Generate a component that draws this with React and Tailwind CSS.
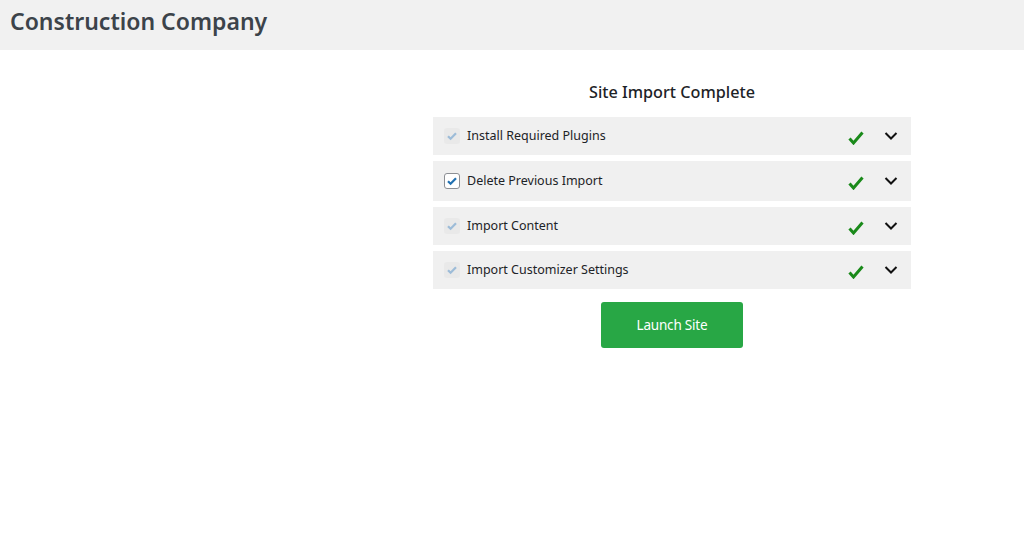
import React from 'react';

const steps = [
  { label: 'Install Required Plugins', active: false },
  { label: 'Delete Previous Import', active: true },
  { label: 'Import Content', active: false },
  { label: 'Import Customizer Settings', active: false },
];

function Box({ active }) {
  if (active) {
    return (
      <span className="w-4 h-4 rounded-[3px] border border-[#8c8f94] bg-white flex items-center justify-center">
        <svg width="12" height="12" viewBox="0 0 12 12">
          <path d="M2 6.2l2.6 2.6L10 3.2" fill="none" stroke="#2271b1" strokeWidth="2.2" />
        </svg>
      </span>
    );
  }
  return (
    <span className="w-4 h-4 rounded-[3px] bg-[#e9e9e9] flex items-center justify-center">
      <svg width="12" height="12" viewBox="0 0 12 12">
        <path d="M2 6.2l2.6 2.6L10 3.2" fill="none" stroke="#9dbcd8" strokeWidth="2.2" />
      </svg>
    </span>
  );
}

function Row({ label, active }) {
  return (
    <div className={`bg-[#f0f0f0] flex items-center pl-[11px] pr-[13px] ${active ? 'h-10' : 'h-[38px]'}`}>
      <Box active={active} />
      <span className="ml-[7px] text-[12.5px] text-[#1d2327] pt-px">{label}</span>
      <div className="ml-auto flex items-center gap-[20px] pt-1">
        <svg width="16" height="14" viewBox="0 0 16 14">
          <path d="M1.5 7.5l4 4.5L14.5 1.5" fill="none" stroke="#1a8a1a" strokeWidth="3" />
        </svg>
        <svg width="14" height="10" viewBox="0 0 14 10" className="-mt-1">
          <path d="M1.5 2l5.5 5.5L12.5 2" fill="none" stroke="#111" strokeWidth="2" />
        </svg>
      </div>
    </div>
  );
}

export default function App() {
  return (
    <div className="min-h-[550px] bg-white font-['Noto_Sans',sans-serif]">
      <header className="h-[50px] bg-[#f1f1f1] flex items-center px-[10px]">
        <h1 className="text-[23px] font-semibold text-[#3c434a] -mt-[7px]">Construction Company</h1>
      </header>
      <div className="flex">
        <div className="w-[433px] shrink-0" />
        <div className="w-[478px] flex flex-col">
          <h2 className="text-center text-[16.2px] font-medium text-[#1d2327] mt-[30px] mb-[13px]">Site Import Complete</h2>
          <div className="flex flex-col gap-[6px]">
            {steps.map((s) => (
              <Row key={s.label} {...s} />
            ))}
          </div>
          <div className="flex justify-center mt-[13px]">
            <button className="w-[142px] h-[46px] rounded-[3px] bg-[#28a745] text-white text-[13.5px] -tracking-[0.2px]">Launch Site</button>
          </div>
        </div>
      </div>
    </div>
  );
}
